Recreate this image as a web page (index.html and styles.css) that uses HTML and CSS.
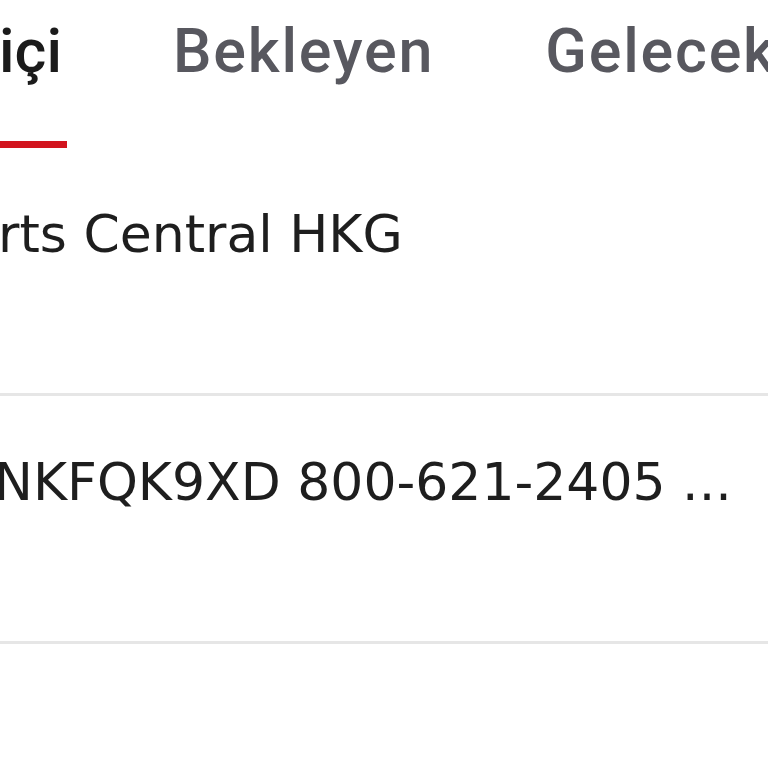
FILE: index.html
```html
<!DOCTYPE html>
<html lang="tr">
<head>
<meta charset="utf-8">
<link rel="stylesheet" href="styles.css">
</head>
<body>
  <nav class="tabs">
    <div class="tab tab-active"><span class="tab-label">Uçuş içi</span></div>
    <div class="tab"><span class="tab-label">Bekleyen</span></div>
    <div class="tab"><span class="tab-label">Gelecek</span></div>
  </nav>
  <ul class="list">
    <li class="row"><span class="row-text row-text-1">rts Central HKG</span></li>
    <li class="row"><span class="row-text row-text-2">NKFQK9XD 800-621-2405 ...</span></li>
    <li class="row row-empty"></li>
  </ul>
</body>
</html>
```
FILE: styles.css
```css
html, body {
  margin: 0;
  padding: 0;
  background: #ffffff;
  overflow: hidden;
  width: 768px;
  height: 768px;
}

body {
  font-family: "DejaVu Sans", "Lato", sans-serif;
}

.tabs {
  display: flex;
  align-items: flex-start;
  gap: 111px;
  height: 148px;
  white-space: nowrap;
}

.tab {
  position: relative;
  font-family: Roboto, "Liberation Sans", sans-serif;
  font-weight: 500;
  font-size: 61px;
  letter-spacing: 1.8px;
  line-height: 1;
  color: #58585f;
  padding-top: 21px;
  height: 127px;
  flex: none;
}

.tab-active {
  width: 62px;
  display: flex;
  justify-content: flex-end;
  color: #1b1b1b;
  letter-spacing: 0;
}

.tab-active::after {
  content: "";
  position: absolute;
  left: -200px;
  right: -5px;
  bottom: 0;
  height: 7px;
  background: #d2141e;
}

.list {
  list-style: none;
  margin: 0;
  padding: 0;
}

.row {
  height: 245px;
  border-bottom: 3px solid #e6e6e6;
  padding: 0;
  white-space: nowrap;
}

.row-text {
  display: block;
  font-size: 52px;
  line-height: 1;
  font-weight: 400;
  color: #1e1e1e;
  padding-top: 60px;
}

.row-text-1 {
  margin-left: -2px;
}

.row-text-2 {
  margin-left: -6px;
}

.row-empty {
  height: 120px;
  border-bottom: none;
}
```
